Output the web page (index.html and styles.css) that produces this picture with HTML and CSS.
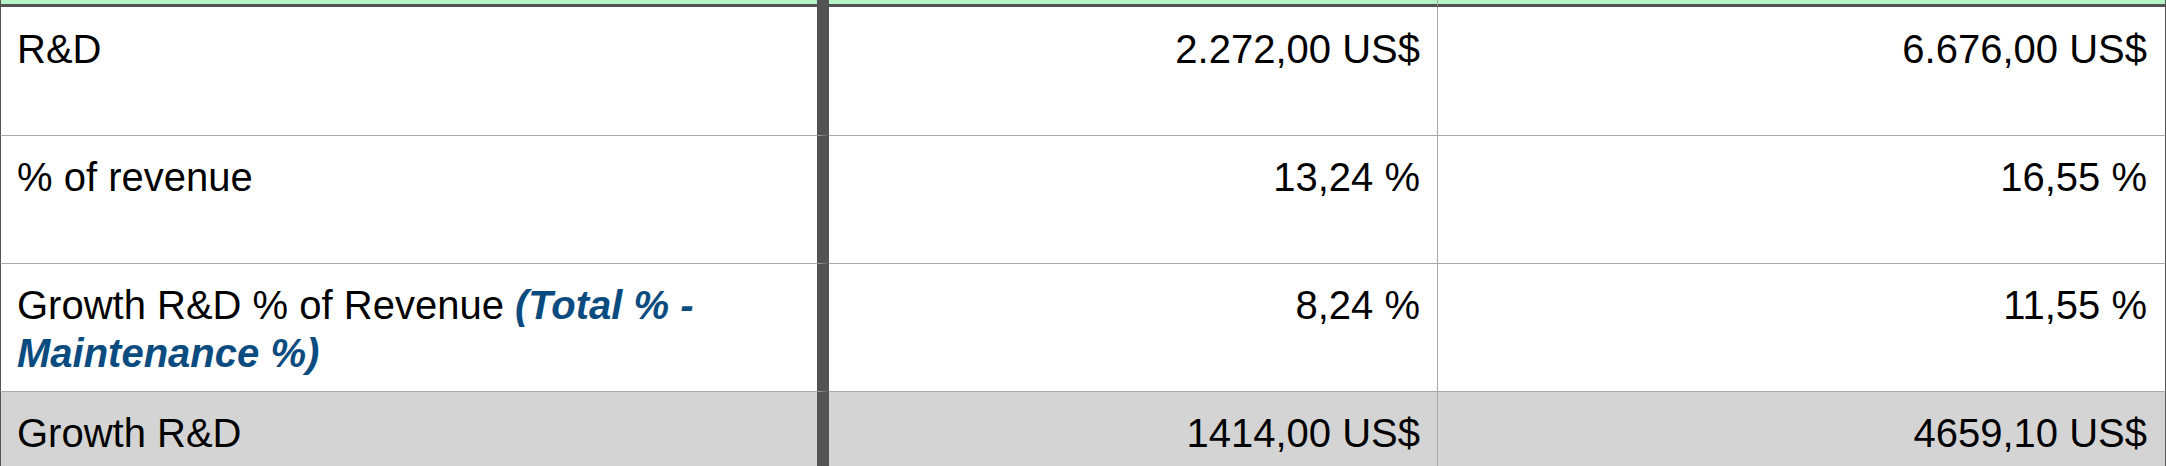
FILE: index.html
```html
<!DOCTYPE html>
<html lang="en">
<head>
    <meta charset="UTF-8">
    <meta name="viewport" content="width=device-width, initial-scale=1.0">
    <title>R&amp;D Sheet</title>
    <link rel="stylesheet" href="styles.css">
</head>
<body>
    <table class="sheet">
        <colgroup>
            <col class="col-label">
            <col class="col-a">
            <col class="col-b">
        </colgroup>
        <tr class="head">
            <td class="label"></td>
            <td class="num"></td>
            <td class="num"></td>
        </tr>
        <tr class="first">
            <td class="label">R&amp;D</td>
            <td class="num">2.272,00 US$</td>
            <td class="num">6.676,00 US$</td>
        </tr>
        <tr>
            <td class="label">% of revenue</td>
            <td class="num">13,24 %</td>
            <td class="num">16,55 %</td>
        </tr>
        <tr>
            <td class="label">Growth R&amp;D % of Revenue <span class="note">(Total % - Maintenance %)</span></td>
            <td class="num">8,24 %</td>
            <td class="num">11,55 %</td>
        </tr>
        <tr class="total">
            <td class="label">Growth R&amp;D</td>
            <td class="num">1414,00 US$</td>
            <td class="num">4659,10 US$</td>
        </tr>
    </table>
</body>
</html>
```

FILE: styles.css
```css
body {
    margin: 0;
    padding: 0;
    background: #fff;
    font-family: "Liberation Sans", Arial, Helvetica, sans-serif;
    color: #000;
}
.sheet {
    width: 2166px;
    table-layout: fixed;
    border-collapse: separate;
    border-spacing: 0;
}
.col-label {
    width: 829px;
}
.col-a {
    width: 609px;
}
.col-b {
    width: 728px;
}
.sheet td {
    height: 128px;
    padding: 17px 17px 0 16px;
    box-sizing: border-box;
    vertical-align: top;
    font-size: 40px;
    line-height: 48px;
    border-bottom: 1px solid #a9a9a9;
    border-right: 1px solid #a9a9a9;
}
.sheet td.label {
    border-left: 1px solid #555;
    border-right: 12px solid #535353;
}
.sheet td:last-child {
    border-right: 1px solid #555;
    padding-right: 18px;
}
.sheet .first td {
    height: 129px;
    padding-top: 18px;
}
.sheet .head td {
    height: 7px;
    padding: 0;
    background: #b4f5c8;
    border-bottom: 3px solid #535353;
}
.num {
    text-align: right;
}
.note {
    color: #0b4c80;
    font-weight: bold;
    font-style: italic;
}
.total td {
    background: #d4d4d4;
}
```
